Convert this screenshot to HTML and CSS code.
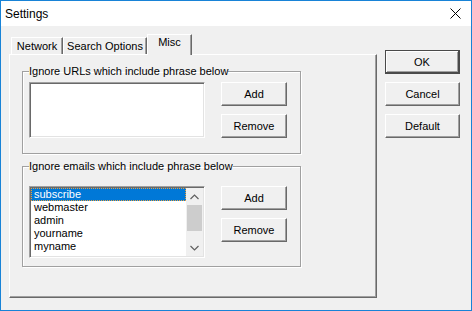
FILE: index.html
```html
<!DOCTYPE html>
<html lang="en">
<head>
  <meta charset="UTF-8" />
  <title>Settings</title>
  <link rel="stylesheet" href="styles.css">
</head>
<body>

  <div class="window">
    <div class="titlebar">
      <span class="title">Settings</span>
      <svg class="close" width="11" height="11" viewBox="0 0 11 11">
        <path d="M0.5 0.5 L10.5 10.5 M10.5 0.5 L0.5 10.5" stroke="#000" stroke-width="1" fill="none"/>
      </svg>
    </div>

    <div class="content">
      <div class="tabs-area">
        <div class="tab-strip">
          <div class="tab tab-network">Network</div>
          <div class="tab tab-search">Search Options</div>
          <div class="tab tab-misc selected">Misc</div>
        </div>

        <div class="panel">
          <fieldset class="group group-urls">
            <legend>Ignore URLs which include phrase below</legend>
            <div class="group-row">
              <div class="listbox listbox-urls"></div>
              <div class="group-buttons">
                <button class="btn">Add</button>
                <button class="btn">Remove</button>
              </div>
            </div>
          </fieldset>

          <fieldset class="group group-emails">
            <legend>Ignore emails which include phrase below</legend>
            <div class="group-row">
              <div class="listbox listbox-emails">
                <div class="items">
                  <div class="item selected"><span>subscribe</span></div>
                  <div class="item"><span>webmaster</span></div>
                  <div class="item"><span>admin</span></div>
                  <div class="item"><span>yourname</span></div>
                  <div class="item"><span>myname</span></div>
                </div>
                <div class="scrollbar">
                  <div class="sb-arrow">
                    <svg width="9" height="6" viewBox="0 0 9 6"><path d="M0.5 5 L4.5 1 L8.5 5" stroke="#606060" stroke-width="1.2" fill="none"/></svg>
                  </div>
                  <div class="sb-track">
                    <div class="sb-thumb"></div>
                  </div>
                  <div class="sb-arrow">
                    <svg width="9" height="6" viewBox="0 0 9 6"><path d="M0.5 1 L4.5 5 L8.5 1" stroke="#606060" stroke-width="1.2" fill="none"/></svg>
                  </div>
                </div>
              </div>
              <div class="group-buttons">
                <button class="btn">Add</button>
                <button class="btn">Remove</button>
              </div>
            </div>
          </fieldset>
        </div>
      </div>

      <div class="side-buttons">
        <button class="btn btn-side default">OK</button>
        <button class="btn btn-side">Cancel</button>
        <button class="btn btn-side">Default</button>
      </div>
    </div>
  </div>

</body>
</html>
```

FILE: styles.css
```css
html, body {
  margin: 0;
  padding: 0;
}
body {
  font-family: "Liberation Sans", Arial, sans-serif;
  font-size: 11px;
  color: #000;
  background: #f0f0f0;
}
.window {
  box-sizing: border-box;
  width: 472px;
  height: 311px;
  border: 1px solid #1883d7;
  background: #f0f0f0;
}
.titlebar {
  height: 25px;
  background: #fff;
  display: flex;
  align-items: center;
  justify-content: space-between;
  padding: 0 10px 0 4px;
}
.title {
  font-size: 12px;
  margin-top: 1px;
}
.close {
  margin-top: -1px;
}
.content {
  display: flex;
  padding: 8px 0 0 8px;
}
.tabs-area {
  width: 368px;
}
.tab-strip {
  display: flex;
  align-items: flex-end;
  height: 20px;
  padding-left: 2px;
  position: relative;
  z-index: 1;
}
.tab {
  box-sizing: border-box;
  height: 17px;
  border-top: 1px solid #fff;
  border-left: 1px solid #fff;
  border-right: 1px solid #696969;
  box-shadow: inset -1px 0 #a0a0a0;
  text-align: center;
  padding-top: 2px;
  line-height: 13px;
}
.tab-network {
  width: 52px;
}
.tab-search {
  width: 84px;
}
.tab-misc {
  width: 45px;
}
.tab.selected {
  height: 21px;
  margin-bottom: -1px;
  padding-top: 1px;
  background: #f0f0f0;
}
.panel {
  box-sizing: border-box;
  height: 244px;
  border-top: 1px solid #fff;
  border-left: 1px solid #fff;
  border-right: 1px solid #696969;
  border-bottom: 1px solid #696969;
  box-shadow: inset -1px -1px #a0a0a0;
  padding: 10px 0 0 12px;
}
.group {
  box-sizing: border-box;
  width: 279px;
  margin: 0;
  min-inline-size: 0;
  border: 1px solid #a0a0a0;
  box-shadow: inset 1px 1px #fff, 1px 1px #fff;
}
.group legend {
  padding: 0;
  line-height: 13px;
}
.group-urls {
  padding: 4px 13px 15px 6px;
}
.group-emails {
  margin-top: 6px;
  padding: 13px 13px 8px 6px;
}
.group-row {
  display: flex;
  gap: 16px;
}
.group-buttons {
  display: flex;
  flex-direction: column;
  gap: 8px;
}
.btn {
  box-sizing: border-box;
  font-family: "Liberation Sans", Arial, sans-serif;
  font-size: 11px;
  color: #000;
  background: #f0f0f0;
  width: 66px;
  height: 24px;
  padding: 0;
  border-top: 1px solid #fff;
  border-left: 1px solid #fff;
  border-right: 1px solid #696969;
  border-bottom: 1px solid #696969;
  box-shadow: inset -1px -1px #a0a0a0;
}
.btn-side {
  width: 75px;
}
.btn.default {
  border: 1px solid #4a4a4a;
  border-right-width: 2px;
  border-bottom-width: 2px;
  box-shadow: inset 1px 1px #fff, inset -1px -1px #a0a0a0;
}
.side-buttons {
  display: flex;
  flex-direction: column;
  gap: 8px;
  margin-left: 8px;
  padding-top: 16px;
}
.listbox {
  box-sizing: border-box;
  width: 176px;
  background: #fff;
  border-top: 1px solid #a0a0a0;
  border-left: 1px solid #a0a0a0;
  border-right: 1px solid #fff;
  border-bottom: 1px solid #fff;
  box-shadow: inset 1px 1px #696969, inset -1px -1px #e3e3e3;
}
.listbox-urls {
  height: 56px;
}
.listbox-emails {
  height: 72px;
  display: flex;
  padding: 1px;
  overflow: hidden;
}
.items {
  flex: 1;
  overflow: hidden;
}
.item {
  height: 13px;
  line-height: 13px;
  padding-left: 3px;
  white-space: nowrap;
}
.item.selected {
  background: #0078d7;
  color: #fff;
  outline: 1px dotted #e8a040;
  outline-offset: -1px;
}
.scrollbar {
  width: 17px;
  display: flex;
  flex-direction: column;
  background: #f0f0f0;
}
.sb-arrow {
  height: 17px;
  display: flex;
  align-items: center;
  justify-content: center;
}
.sb-track {
  flex: 1;
}
.sb-thumb {
  height: 26px;
  background: #cdcdcd;
  margin: 0 1px;
}
```
